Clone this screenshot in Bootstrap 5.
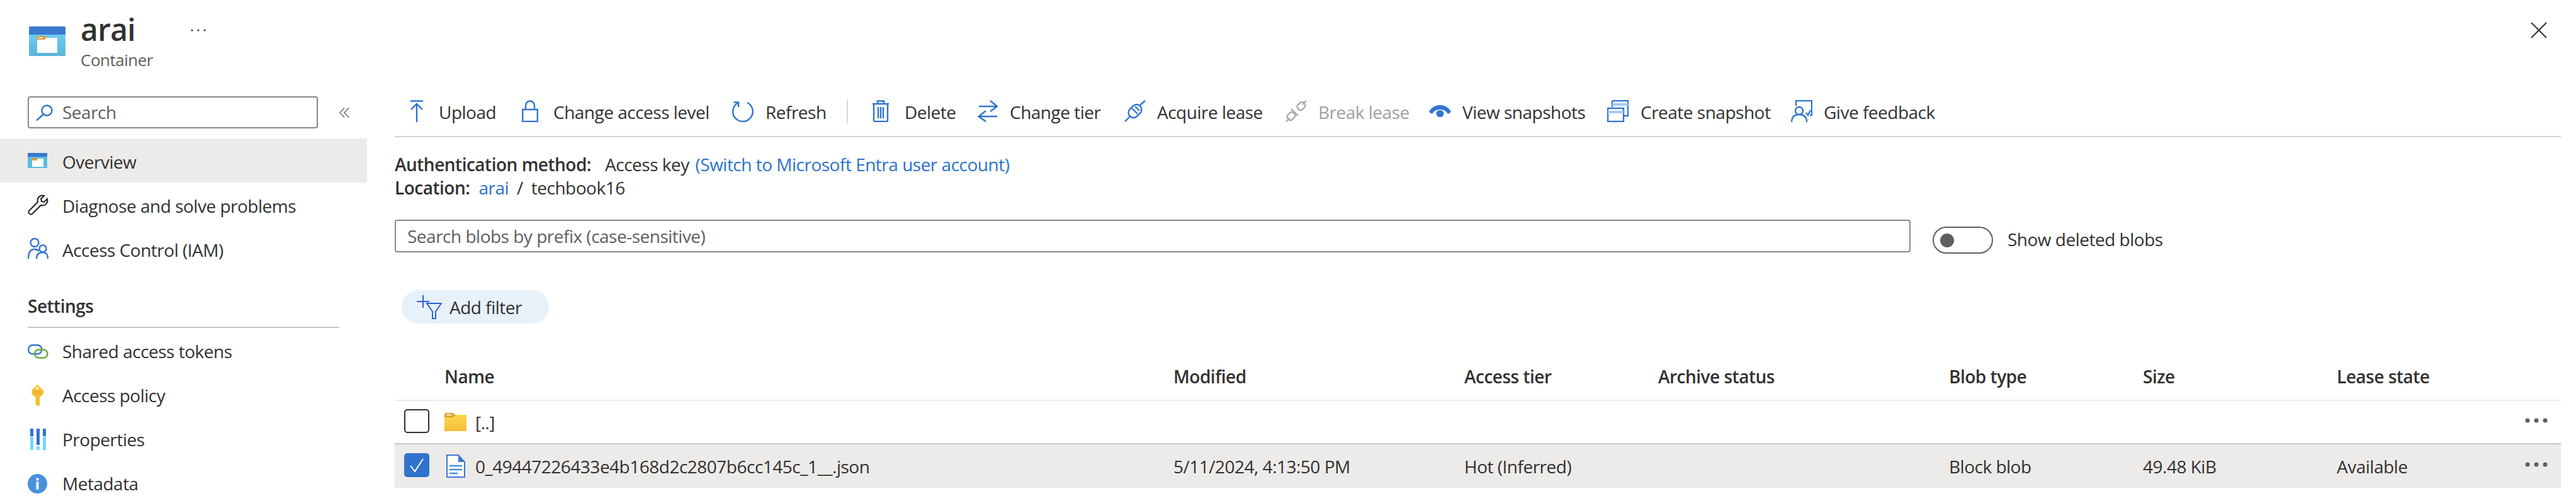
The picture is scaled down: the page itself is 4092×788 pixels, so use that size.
<!DOCTYPE html>
<html lang="en">
<head>
  <meta charset="UTF-8">
  <title>arai - Container</title>
  <link href="https://cdn.jsdelivr.net/npm/bootstrap@5.3.0/dist/css/bootstrap.min.css" rel="stylesheet">
  <style>
    html, body { height: 788px; overflow: hidden; }
    body { font-family: "Open Sans", "Noto Sans", sans-serif; font-size: 28px; color: #323130; letter-spacing: -0.5px; background: #fff; }
    svg { display: block; flex: none; }
    .ic { fill: none; stroke: #2f74d0; stroke-width: 2.4; }
    .off { stroke: #a9a7a5; }
    .strong { font-weight: 600; }

    .blade-head { height: 140px; }
    .blade-logo { margin: 42px 0 0 46px; }
    .blade-title { margin-left: 24px; padding-top: 19px; }
    .blade-title h1 { font-size: 48px; line-height: 56px; font-weight: 600; margin: 0; letter-spacing: -0.7px; }
    .blade-title p { font-size: 26px; line-height: 34px; margin: 3px 0 0; color: #605e5c; }
    .blade-more { margin: 46px 0 0 60px; }
    .blade-close { margin: 35px 46px 0 auto; }

    .side { width: 583px; flex: none; }
    .side-search { height: 51px; width: 461px; margin-left: 44px; border: 2px solid #8a8886; border-radius: 4px; padding-left: 11px; gap: 15px; color: #605e5c; }
    .side-search span { padding-bottom: 2px; }
    .side-top { margin: 13px 0 16px; gap: 34px; }
    .side-link { height: 70px; color: #323130; text-decoration: none; padding: 3px 0 0 44px; }
    .side-link.on { background: #edebe9; }
    .side-ico { width: 55px; flex: none; margin-top: -3px; }
    .side-head { margin: 36px 44px 0; padding-bottom: 13px; line-height: 40px; font-weight: 600; width: 495px; border-bottom: 2px solid #c8c6c4; }
    .side-head ~ .side-link .side-ico { margin-top: 1px; }

    .main-pane { margin-left: 44px; width: 3441px; flex: none; }
    .cmdbar { display: grid; grid-template-columns: 178px 333px 183px 40px 168px 233px 256px 228px 283px 292px auto; height: 78px; padding: 18px 0 0 24px; border-bottom: 2px solid #d6d6d6; align-items: start; line-height: 40px; }
    .cmd { gap: 19px; height: 40px; align-items: center; white-space: nowrap; }
    .cmd svg { margin-top: -4px; }
    .cmd.gap-wide { gap: 24px; }
    .cmd.gap-slim { gap: 18px; }
    .cmd.off-txt { color: #a19f9d; }
    .cmd-sep { width: 2px; height: 38px; background: #d6d6d6; }

    .info-lines { padding-top: 25px; line-height: 37px; }
    .info-lines a { color: #2a72cc; text-decoration: none; }
    .auth-key { margin: 0 3px 0 22px; }
    .loc-arai { margin-left: 14px; }
    .loc-slash { margin: 0 13px; }

    .prefix-row { margin-top: 32px; }
    .prefix-box { width: 2408px; height: 52px; border: 2px solid #8a8886; border-radius: 4px; padding-left: 18px; color: #605e5c; line-height: 48px; }
    .del-toggle { width: 96px; height: 43px; border: 2px solid #605e5c; border-radius: 22px; margin: 11px 23px 0 35px; padding-left: 10px; }
    .del-knob { width: 22px; height: 22px; border-radius: 50%; background: #605e5c; }
    .del-label { margin-top: 12px; line-height: 38px; }

    .filter-pill { margin: 58px 0 0 11px; width: 234px; height: 53px; border-radius: 27px; background: #e7f1fa; padding-left: 24px; gap: 12px; }

    .blob-table { table-layout: fixed; width: 3441px; margin-top: 46px; border-collapse: collapse; }
    .blob-table th, .blob-table td { padding: 0; font-weight: 400; vertical-align: middle; white-space: nowrap; }
    .blob-table thead th { height: 76px; font-weight: 600; border-bottom: 2px solid #edebe9; }
    .blob-table .r-parent td { height: 69px; border-bottom: 2px solid #c8c6c4; }
    .blob-table .r-sel td { height: 70px; background: #edebe9; }
    .c-chk { width: 79px; } .c-name { width: 1158px; } .c-w { width: 462px; } .c-n { width: 308px; } .c-lease { width: 288px; } .c-more { width: 68px; }
    .tick { width: 40px; height: 38px; margin: -3px 0 0 15px; border: 2px solid #323130; border-radius: 5px; }
    .tick.on { background: #2f73cc; border-color: #2f73cc; }
    .name-cell { gap: 14px; }
    .more-dots { margin: -5px 0 0 11px; }
  </style>
</head>
<body>
  <div class="d-flex flex-column">
    <header class="blade-head d-flex align-items-start">
      <svg class="blade-logo" width="58" height="47" viewBox="0 0 58 47">
        <defs><linearGradient id="boxg" x1="0" y1="0" x2="0" y2="1"><stop offset="0" stop-color="#6fd8f8"/><stop offset="1" stop-color="#59b4d9"/></linearGradient></defs>
        <rect width="58" height="47" rx="2" fill="url(#boxg)"/>
        <path d="M0 2a2 2 0 0 1 2-2h54a2 2 0 0 1 2 2v11H0z" fill="#3a78d0"/>
        <rect x="13" y="18" width="32" height="24" fill="#fff"/>
        <path d="M13 15h12l3 3-3 3H13z" fill="#e89a3c"/>
        <rect x="15" y="17" width="7" height="1.5" fill="#fff"/>
      </svg>
      <div class="blade-title">
        <h1>arai</h1>
        <p>Container</p>
      </div>
      <svg class="blade-more" width="24" height="4" viewBox="0 0 24 4" fill="#323130"><circle cx="2" cy="2" r="1.5"/><circle cx="12" cy="2" r="1.5"/><circle cx="22" cy="2" r="1.5"/></svg>
      <svg class="blade-close" width="26" height="26" viewBox="0 0 26 26" stroke="#323130" stroke-width="2"><path d="M1 1l24 24M25 1L1 25"/></svg>
    </header>

    <div class="d-flex">
      <aside class="side">
        <div class="side-top d-flex align-items-center">
          <div class="side-search d-flex align-items-center">
            <svg class="ic" width="27" height="26" viewBox="0 0 27 26" stroke-width="2"><circle cx="17.5" cy="9.5" r="8"/><path d="M12 15.5L1 25.5"/></svg>
            <span>Search</span>
          </div>
          <svg width="16" height="16" viewBox="0 0 16 16" fill="none" stroke="#605e5c" stroke-width="1.3"><path d="M8 0.5L0.8 8l7.2 7.5M15 0.5L7.8 8l7.2 7.5"/></svg>
        </div>
        <a class="side-link on d-flex align-items-center" href="#">
          <span class="side-ico"><svg width="31" height="24" viewBox="0 0 31 24"><rect width="31" height="24" fill="#5cbde2"/><rect width="31" height="6" fill="#3a78d0"/><rect x="7" y="9" width="18" height="13" fill="#fff"/><rect x="7" y="8" width="8" height="4" fill="#e89a3c"/></svg></span>Overview
        </a>
        <a class="side-link d-flex align-items-center" href="#">
          <span class="side-ico"><svg width="33" height="33" viewBox="0 0 33 33" fill="none" stroke="#201f1e" stroke-width="2"><path d="M2 26L16 12C14 6 19 0 26 2L21 7l1 4 4 1 5-5c2 7-4 12-10 10L7 31c-3 2-7-2-5-5z"/></svg></span>Diagnose and solve problems
        </a>
        <a class="side-link d-flex align-items-center" href="#">
          <span class="side-ico"><svg class="ic" width="33" height="34" viewBox="0 0 33 34" stroke-width="2"><circle cx="11" cy="7.5" r="6.5"/><path d="M1 33c0-10 3-15 10-15 3 0 5 1 6.500 3"/><circle cx="24" cy="17" r="5.500"/><path d="M14 33c0-7 3-10 10-10 6 0 8 3 8 10"/></svg></span>Access Control (IAM)
        </a>
        <div class="side-head">Settings</div>
        <a class="side-link d-flex align-items-center" href="#">
          <span class="side-ico"><svg width="33" height="23" viewBox="0 0 33 23" fill="none" stroke-width="2.400"><rect x="1.200" y="1.200" width="21" height="14" rx="6.500" stroke="#3a78d0"/><rect x="11" y="8.500" width="20.500" height="13" rx="6.500" stroke="#6aa83a"/></svg></span>Shared access tokens
        </a>
        <a class="side-link d-flex align-items-center" href="#">
          <span class="side-ico"><svg width="30" height="34" viewBox="0 0 30 34"><path d="M15 0l10 9v6l-6 5v13l-2.500 1-4-2V20l-6-5V9z" fill="#f7c033"/><circle cx="15" cy="6" r="2" fill="#fff"/><path d="M9 11h12M9 14h12" stroke="#e39a1f" stroke-width="1.200"/></svg></span>Access policy
        </a>
        <a class="side-link d-flex align-items-center" href="#">
          <span class="side-ico"><svg width="33" height="34" viewBox="0 0 33 34"><rect x="4" width="5" height="12" fill="#2f74d0"/><rect x="4" y="13" width="5" height="21" fill="#6fd8f8"/><rect x="14" width="5" height="26" fill="#2f74d0"/><rect x="14" y="28" width="5" height="6" fill="#6fd8f8"/><rect x="24" width="5" height="12" fill="#2f74d0"/><rect x="24" y="13" width="5" height="21" fill="#6fd8f8"/></svg></span>Properties
        </a>
        <a class="side-link d-flex align-items-center" href="#">
          <span class="side-ico"><svg width="31" height="31" viewBox="0 0 31 31"><circle cx="15.500" cy="15.500" r="15.500" fill="#4a90dc"/><circle cx="15.500" cy="8.500" r="2.200" fill="#fff"/><rect x="13.500" y="12.500" width="4" height="12" fill="#fff"/></svg></span>Metadata
        </a>
      </aside>

      <main class="main-pane">
        <div class="cmdbar">
          <div class="cmd gap-wide d-flex"><svg class="ic" width="22" height="35" viewBox="0 0 22 35"><path d="M1 1.500h20M11 35V6M2 15l9-9 9 9"/></svg>Upload</div>
          <div class="cmd gap-wide d-flex"><svg class="ic" width="26" height="35" viewBox="0 0 26 35"><rect x="1.200" y="15" width="23.600" height="19"/><path d="M6 15V9c0-10 14-10 14 0v6"/></svg>Change access level</div>
          <div class="cmd d-flex"><svg class="ic" width="35" height="35" viewBox="0 0 35 35"><path d="M10.500 4.200a15.800 15.800 0 1 0 14.500-.2"/><path d="M3.500 3.500H11V11"/></svg>Refresh</div>
          <div class="cmd-sep"></div>
          <div class="cmd gap-wide d-flex"><svg class="ic" width="28" height="35" viewBox="0 0 28 35"><path d="M1 6h26M9 6V1.500h10V6M3 6v26a2 2 0 0 0 2 2h18a2 2 0 0 0 2-2V6M10 11v18M14 11v18M18 11v18"/></svg>Delete</div>
          <div class="cmd d-flex"><svg class="ic" width="32" height="35" viewBox="0 0 32 35"><path d="M2 10h29M20 1l11 9-11 8M31 26H2M13 17L1.500 26 13 34"/></svg>Change tier</div>
          <div class="cmd gap-slim d-flex"><svg class="ic" width="34" height="35" viewBox="0 0 34 35"><path d="M1 34l8-8M25 8l8-7"/><rect x="9" y="6" width="16" height="23" rx="8" transform="rotate(45 17 17.500)"/><path d="M12 13l9 9M17 10l7 7"/></svg>Acquire lease</div>
          <div class="cmd gap-slim off-txt d-flex"><svg class="ic off" width="34" height="35" viewBox="0 0 34 35"><path d="M1 34l6-6M27 7l6-6"/><rect x="20" y="3" width="10" height="13" rx="4" transform="rotate(45 25 9.500)"/><rect x="4" y="19" width="10" height="13" rx="4" transform="rotate(45 9 25.500)"/><path d="M9 14l11 11"/></svg>Break lease</div>
          <div class="cmd gap-slim d-flex"><svg width="35" height="35" viewBox="0 0 35 35" fill="#2f74d0"><path d="M0 19C3 12 10 8 17.500 8S32 12 35 19l-5 3C27 17 23 15 17.500 15S8 17 5 22z"/><ellipse cx="17.500" cy="21.500" rx="6" ry="5.500"/></svg>View snapshots</div>
          <div class="cmd d-flex"><svg class="ic" width="34" height="35" viewBox="0 0 34 35" stroke-width="2"><path d="M8 1h25v24h-6M8 1v10"/><path d="M8 7h25" stroke="#a8c8f0" stroke-width="4"/><rect x="1" y="13" width="25" height="21" fill="#fff"/><path d="M1 19h25" stroke="#a8c8f0" stroke-width="4"/></svg>Create snapshot</div>
          <div class="cmd gap-slim d-flex"><svg class="ic" width="34" height="35" viewBox="0 0 34 35" stroke-width="2"><path d="M8 9V1h25v23h-3M24 20l3 4 4-8"/><circle cx="13" cy="17" r="6"/><path d="M1 35c0-8 4-12 12-12s12 4 12 12"/></svg>Give feedback</div>
        </div>

        <div class="info-lines">
          <div class="d-flex"><span class="strong">Authentication method:</span><span class="auth-key">Access key</span>&nbsp;<a href="#">(Switch to Microsoft Entra user account)</a></div>
          <div class="d-flex"><span class="strong">Location:</span><a class="loc-arai" href="#">arai</a><span class="loc-slash">/</span>techbook16</div>
        </div>

        <div class="prefix-row d-flex align-items-start">
          <div class="prefix-box">Search blobs by prefix (case-sensitive)</div>
          <div class="del-toggle d-flex align-items-center"><span class="del-knob"></span></div>
          <span class="del-label">Show deleted blobs</span>
        </div>

        <div class="filter-pill d-flex align-items-center">
          <svg width="40" height="38" viewBox="0 0 40 38" fill="none" stroke="#2f5fd0" stroke-width="2"><path d="M10 0v20M0 10h20M16 13h23L30 26v11h-5V26z"/></svg>
          <span>Add filter</span>
        </div>

        <table class="blob-table">
          <colgroup>
            <col class="c-chk"><col class="c-name"><col class="c-w"><col class="c-n"><col class="c-w"><col class="c-n"><col class="c-n"><col class="c-lease"><col class="c-more">
          </colgroup>
          <thead>
            <tr>
              <th></th><th>Name</th><th>Modified</th><th>Access tier</th><th>Archive status</th><th>Blob type</th><th>Size</th><th>Lease state</th><th></th>
            </tr>
          </thead>
          <tbody>
            <tr class="r-parent">
              <td><div class="tick"></div></td>
              <td>
                <div class="name-cell d-flex align-items-center">
                  <svg width="35" height="29" viewBox="0 0 35 29"><defs><linearGradient id="fold" x1="0" y1="0" x2="0" y2="1"><stop offset="0" stop-color="#f9d849"/><stop offset="1" stop-color="#f6be3a"/></linearGradient></defs><path d="M0 3h35v26H0z" fill="url(#fold)"/><path d="M0 2a2 2 0 0 1 2-2h12l4 4-4 3H0z" fill="#d9a83a"/><rect x="3" y="2.500" width="8" height="1.500" fill="#fff"/></svg>
                  <span>[..]</span>
                </div>
              </td>
              <td></td><td></td><td></td><td></td><td></td><td></td>
              <td><svg class="more-dots" width="36" height="8" viewBox="0 0 36 8" fill="#605e5c"><circle cx="4" cy="4" r="3.500"/><circle cx="18" cy="4" r="3.500"/><circle cx="32" cy="4" r="3.500"/></svg></td>
            </tr>
            <tr class="r-sel">
              <td><div class="tick on d-flex align-items-center justify-content-center"><svg width="24" height="24" viewBox="0 0 24 24" fill="none" stroke="#fff" stroke-width="2"><path d="M2 13l7 9L22 2"/></svg></div></td>
              <td>
                <div class="name-cell d-flex align-items-center">
                  <svg width="35" height="37" viewBox="0 0 35 37"><path d="M4 1h18l10 11v24H4z" fill="#fff" stroke="#3a78d0" stroke-width="2"/><path d="M22 1v11h10z" fill="#3a78d0"/><path d="M8 18h20M8 24h20M8 30h13" stroke="#4a90dc" stroke-width="2.500"/></svg>
                  <span>0_49447226433e4b168d2c2807b6cc145c_1__.json</span>
                </div>
              </td>
              <td>5/11/2024, 4:13:50 PM</td><td>Hot (Inferred)</td><td></td><td>Block blob</td><td>49.48 KiB</td><td>Available</td>
              <td><svg class="more-dots" width="36" height="8" viewBox="0 0 36 8" fill="#605e5c"><circle cx="4" cy="4" r="3.500"/><circle cx="18" cy="4" r="3.500"/><circle cx="32" cy="4" r="3.500"/></svg></td>
            </tr>
          </tbody>
        </table>
      </main>
    </div>
  </div>
  <script src="https://cdn.jsdelivr.net/npm/bootstrap@5.3.0/dist/js/bootstrap.bundle.min.js"></script>
</body>
</html>
